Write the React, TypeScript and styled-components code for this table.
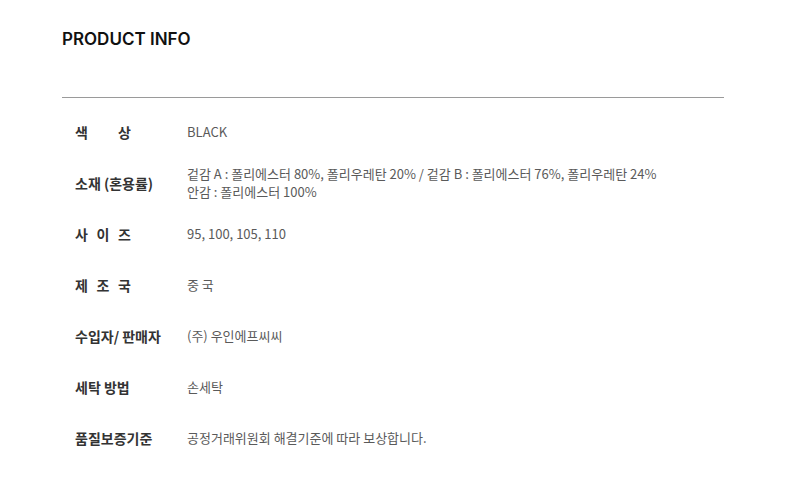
import styled, { createGlobalStyle } from "styled-components";

const GlobalStyle = createGlobalStyle`
  body {
    margin: 0;
    background: #fff;
    font-family: "Noto Sans CJK KR", "Noto Sans", sans-serif;
  }
`;

const Section = styled.section`
  width: 662px;
  padding: 28px 0 0 62px;
`;

const Title = styled.h2`
  margin: 0;
  padding-bottom: 47px;
  border-bottom: 1px solid #9a9a9a;
  font-family: Inter, "Noto Sans", sans-serif;
  font-size: 17px;
  font-weight: 600;
  line-height: 22px;
  color: #111;
`;

const List = styled.dl`
  margin: 0;
  padding: 8px 0 0 13px;
`;

const Row = styled.div`
  display: grid;
  grid-template-columns: 112px 1fr;
  align-items: center;
  min-height: 51px;
`;

const Label = styled.dt<{ $spread?: boolean }>`
  margin: 0;
  width: ${(p) => (p.$spread ? "56px" : "auto")};
  text-align: ${(p) => (p.$spread ? "justify" : "left")};
  text-align-last: ${(p) => (p.$spread ? "justify" : "auto")};
  font-size: 14px;
  font-weight: 700;
  line-height: 20px;
  color: #333;
  white-space: nowrap;
`;

const Value = styled.dd`
  margin: 0;
  font-size: 13px;
  line-height: 18px;
  color: #5a5a5a;
`;

const rows: { label: string; spread?: boolean; value: string[] }[] = [
  { label: "색 상", spread: true, value: ["BLACK"] },
  {
    label: "소재 (혼용률)",
    value: [
      "겉감 A : 폴리에스터 80%, 폴리우레탄 20% / 겉감 B : 폴리에스터 76%, 폴리우레탄 24%",
      "안감 : 폴리에스터 100%",
    ],
  },
  { label: "사 이 즈", spread: true, value: ["95, 100, 105, 110"] },
  { label: "제 조 국", spread: true, value: ["중 국"] },
  { label: "수입자/ 판매자", value: ["(주) 우인에프씨씨"] },
  { label: "세탁 방법", value: ["손세탁"] },
  { label: "품질보증기준", value: ["공정거래위원회 해결기준에 따라 보상합니다."] },
];

export default function App() {
  return (
    <>
      <GlobalStyle />
      <Section>
        <Title>PRODUCT INFO</Title>
        <List>
          {rows.map((row) => (
            <Row key={row.label}>
              <Label $spread={row.spread}>{row.label}</Label>
              <Value>
                {row.value.map((line) => (
                  <div key={line}>{line}</div>
                ))}
              </Value>
            </Row>
          ))}
        </List>
      </Section>
    </>
  );
}
